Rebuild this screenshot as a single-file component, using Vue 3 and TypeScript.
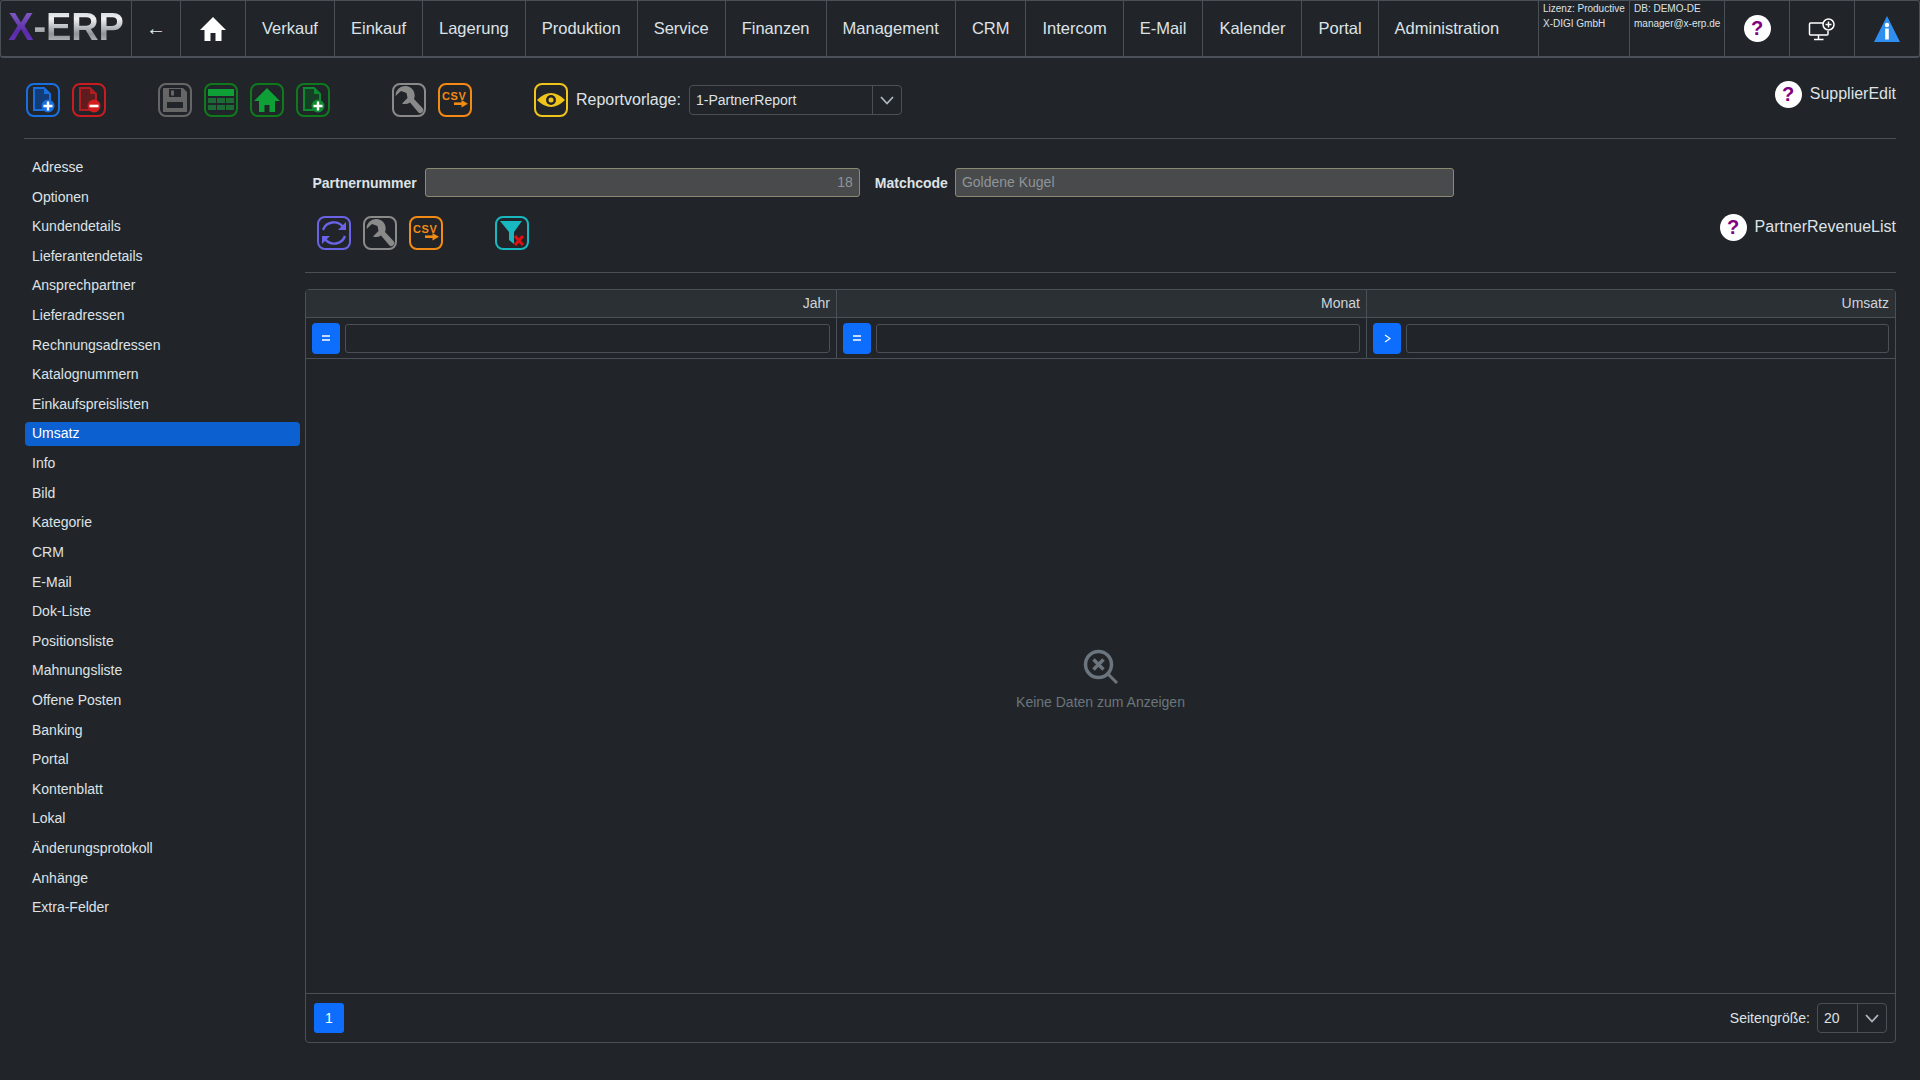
<template>
  <div class="page">
    <header class="navbar">
      <div class="cell logo"><span class="logo-x">X</span><span class="logo-rest">-ERP</span></div>
      <div class="cell back">←</div>
      <div class="cell home">
        <svg width="28" height="26" viewBox="0 0 28 26"><path d="M14 1 L27 14 H22.500 V25 H16.500 V17 H11.500 V25 H5.500 V14 H1 Z" fill="#fff" /></svg>
      </div>
      <div v-for="item in navItems" :key="item" class="cell nav-link">{{ item }}</div>
      <div class="cell nav-link grow">Administration</div>
      <div class="cell info lizenz">
        <div>Lizenz: Productive</div>
        <div>X-DIGI GmbH</div>
      </div>
      <div class="cell info db">
        <div>DB: DEMO-DE</div>
        <div>manager@x-erp.de</div>
      </div>
      <div class="cell tool"><span class="help">?</span></div>
      <div class="cell tool">
        <svg width="28" height="24" viewBox="0 0 28 24" fill="none" stroke="#fff" stroke-width="1.500">
          <path d="M15 6 H2.500 A1 1 0 0 0 1.500 7 V17 A1 1 0 0 0 2.500 18 H19 A1 1 0 0 0 20 17 V14" />
          <path d="M10.500 18 V22 M6 22.500 H15.500" />
          <circle cx="20.500" cy="7.500" r="5.500" />
          <path d="M20.500 4.500 V10.500 M17.500 7.500 H23.500" />
        </svg>
      </div>
      <div class="cell tool">
        <svg width="26" height="26" viewBox="0 0 26 26">
          <path d="M13 0 L26 26 H0 Z" fill="#2e8ff0" />
          <circle cx="13" cy="9" r="2.200" fill="#fff" />
          <rect x="11.200" y="12.500" width="3.600" height="11" fill="#fff" />
        </svg>
      </div>
    </header>

    <section class="toolbar">
      <div class="ico blue">
        <svg viewBox="0 0 30 30"><path d="M6 3 H16 L22 9 V25 H6 Z" fill="#123d78" stroke="#1a6fe0" stroke-width="2" /><path d="M16 3 L22 9 H16 Z" fill="#1a6fe0" /><circle cx="20" cy="21" r="6.500" fill="#1a6fe0" /><path d="M20 16.500 V25.500 M15.500 21 H24.500" stroke="#fff" stroke-width="2.400" /></svg>
      </div>
      <div class="ico red">
        <svg viewBox="0 0 30 30"><path d="M6 3 H16 L22 9 V25 H6 Z" fill="#5e1c1f" stroke="#b01e22" stroke-width="2" /><path d="M16 3 L22 9 H16 Z" fill="#b01e22" /><circle cx="20" cy="21" r="6.500" fill="#d21c20" /><path d="M15.500 21 H24.500" stroke="#fff" stroke-width="2.600" /></svg>
      </div>
      <div class="ico gray gap-a">
        <svg viewBox="0 0 30 30"><path d="M3 3 H23 L27 7 V27 H3 Z" fill="#666" /><rect x="9" y="4" width="12" height="8" fill="#212529" /><rect x="11" y="5.500" width="3" height="5" fill="#666" /><rect x="7" y="17" width="16" height="6" fill="#212529" /></svg>
      </div>
      <div class="ico green">
        <svg viewBox="0 0 30 30"><rect x="2" y="4" width="26" height="7" fill="#0e9f36" /><g fill="#1c6a34"><rect x="2" y="13" width="8" height="5" /><rect x="11" y="13" width="8" height="5" /><rect x="20" y="13" width="8" height="5" /><rect x="2" y="20" width="8" height="5" /><rect x="11" y="20" width="8" height="5" /><rect x="20" y="20" width="8" height="5" /></g></svg>
      </div>
      <div class="ico green">
        <svg viewBox="0 0 30 30"><path d="M15 3 L28 16 H23 V27 H17.500 V20 H12.500 V27 H7 V16 H2 Z" fill="#0e9f36" /></svg>
      </div>
      <div class="ico green">
        <svg viewBox="0 0 30 30"><path d="M6 3 H16 L22 9 V25 H6 Z" fill="#173f26" stroke="#0e8a30" stroke-width="2" /><path d="M16 3 L22 9 H16 Z" fill="#0e8a30" /><circle cx="20" cy="21" r="6.500" fill="#0e8a30" /><path d="M20 16.500 V25.500 M15.500 21 H24.500" stroke="#fff" stroke-width="2.400" /></svg>
      </div>
      <div class="ico wrench gap-b">
        <svg viewBox="0 0 30 30"><path d="M11 1 A9.500 9.500 0 0 0 1.500 11 L7 6 L12.500 8 L13.500 13 L8 18.500 A9.500 9.500 0 0 0 16 17.500 L24 27 A3 3 0 0 0 28.500 23 L20 14 A9.500 9.500 0 0 0 11 1 Z" fill="#8a8a8a" /></svg>
      </div>
      <div class="ico orange">
        <svg viewBox="0 0 30 30"><text x="2" y="15" class="csv-text">CSV</text><path d="M14 18.700 H23" fill="none" stroke="#f28a14" stroke-width="2.600" /><path d="M21.500 15 L28 18.700 L21.500 22.500 Z" fill="#f28a14" /></svg>
      </div>
      <div class="ico yellow gap-c">
        <svg viewBox="0 0 30 30"><path d="M1 15 Q15 1 29 15 Q15 29 1 15 Z" fill="#f0c419" /><circle cx="15" cy="15" r="5" fill="#212529" /><circle cx="15" cy="15" r="2.500" fill="#f0c419" /></svg>
      </div>
      <span class="report-label">Reportvorlage:</span>
      <div class="select report-select">
        <span class="select-value">1-PartnerReport</span>
        <span class="select-arrow"><svg width="14" height="9" viewBox="0 0 14 9"><path d="M1 1 L7 7.500 L13 1" fill="none" stroke="#adb5bd" stroke-width="1.800" /></svg></span>
      </div>
      <div class="help-title"><span class="help">?</span><span>SupplierEdit</span></div>
    </section>
    <hr class="rule top-rule" />

    <div class="body">
      <nav class="side">
        <div v-for="item in sideItems" :key="item" class="side-item" :class="{ active: item === 'Umsatz' }">{{ item }}</div>
      </nav>

      <main class="content">
        <div class="form-row">
          <label class="field-label">Partnernummer</label>
          <div class="field num">18</div>
          <label class="field-label second">Matchcode</label>
          <div class="field match">Goldene Kugel</div>
        </div>
        <div class="list-tools">
          <div class="ico purple">
            <svg viewBox="0 0 30 30" fill="none" stroke="#6a63e6" stroke-width="2.400"><path d="M4 12 A11.500 11.500 0 0 1 24 9" /><path d="M26 18 A11.500 11.500 0 0 1 6 21" /><path d="M27 4 V12 H19 Z" fill="#6a63e6" stroke="none" /><path d="M3 26 V18 H11 Z" fill="#6a63e6" stroke="none" /></svg>
          </div>
          <div class="ico wrench">
            <svg viewBox="0 0 30 30"><path d="M11 1 A9.500 9.500 0 0 0 1.500 11 L7 6 L12.500 8 L13.500 13 L8 18.500 A9.500 9.500 0 0 0 16 17.500 L24 27 A3 3 0 0 0 28.500 23 L20 14 A9.500 9.500 0 0 0 11 1 Z" fill="#8a8a8a" /></svg>
          </div>
          <div class="ico orange">
            <svg viewBox="0 0 30 30"><text x="2" y="15" class="csv-text">CSV</text><path d="M14 18.700 H23" fill="none" stroke="#f28a14" stroke-width="2.600" /><path d="M21.500 15 L28 18.700 L21.500 22.500 Z" fill="#f28a14" /></svg>
          </div>
          <div class="ico teal gap-d">
            <svg viewBox="0 0 30 30"><path d="M3 3 H25 L17 14 V26 L12 22 V14 Z" fill="#17b8c0" /><path d="M18 18 L26 27 M26 18 L18 27" stroke="#e01010" stroke-width="3" /></svg>
          </div>
          <div class="help-title"><span class="help">?</span><span>PartnerRevenueList</span></div>
        </div>
        <hr class="rule" />

        <div class="grid">
          <div class="grid-head">
            <div v-for="col in columns" :key="col.name" class="head-cell">{{ col.name }}</div>
          </div>
          <div class="grid-filter">
            <div v-for="col in columns" :key="col.name" class="filter-cell">
              <button class="op" type="button">
                <svg v-if="col.op === 'eq'" width="8" height="6" viewBox="0 0 8 6"><path d="M0 1 H8 M0 5 H8" stroke="#fff" stroke-width="1.400" /></svg>
                <svg v-else width="7" height="9" viewBox="0 0 7 9"><path d="M1 1 L6 4.500 L1 8" fill="none" stroke="#fff" stroke-width="1.200" /></svg>
              </button>
              <div class="filter-input"></div>
            </div>
          </div>
          <div class="grid-body">
            <svg width="36" height="36" viewBox="0 0 36 36" fill="none" stroke="#6c757d">
              <circle cx="15.500" cy="15.500" r="13" stroke-width="3.500" />
              <path d="M10.500 10.500 L20.500 20.500 M20.500 10.500 L10.500 20.500" stroke-width="3.500" />
              <path d="M25 25 L34 34" stroke-width="3" />
            </svg>
            <div class="empty-text">Keine Daten zum Anzeigen</div>
          </div>
          <div class="grid-foot">
            <button class="page-btn" type="button">1</button>
            <span class="size-label">Seitengröße:</span>
            <div class="select size-select">
              <span class="select-value">20</span>
              <span class="select-arrow"><svg width="14" height="9" viewBox="0 0 14 9"><path d="M1 1 L7 7.500 L13 1" fill="none" stroke="#adb5bd" stroke-width="1.800" /></svg></span>
            </div>
          </div>
        </div>
      </main>
    </div>
  </div>
</template>

<script setup lang="ts">
const navItems: string[] = [
  'Verkauf', 'Einkauf', 'Lagerung', 'Produktion', 'Service', 'Finanzen',
  'Management', 'CRM', 'Intercom', 'E-Mail', 'Kalender', 'Portal'
];

const sideItems: string[] = [
  'Adresse', 'Optionen', 'Kundendetails', 'Lieferantendetails', 'Ansprechpartner',
  'Lieferadressen', 'Rechnungsadressen', 'Katalognummern', 'Einkaufspreislisten',
  'Umsatz', 'Info', 'Bild', 'Kategorie', 'CRM', 'E-Mail', 'Dok-Liste', 'Positionsliste',
  'Mahnungsliste', 'Offene Posten', 'Banking', 'Portal', 'Kontenblatt', 'Lokal',
  'Änderungsprotokoll', 'Anhänge', 'Extra-Felder'
];

const columns = [
  { name: 'Jahr', op: 'eq' },
  { name: 'Monat', op: 'eq' },
  { name: 'Umsatz', op: 'gt' }
];
</script>

<style>
html,
body {
  margin: 0;
  background: #212529;
}
</style>

<style scoped>
.page {
  height: 1080px;
  overflow: hidden;
  background: #212529;
  color: #dee2e6;
  font-family: 'Liberation Sans', Arial, sans-serif;
  font-size: 14px;
}

/* obere Leiste */
.navbar {
  display: flex;
  height: 58px;
  box-sizing: border-box;
  border: 1px solid #495057;
  border-bottom-width: 2px;
  border-radius: 3px;
}

.cell {
  display: flex;
  align-items: center;
  justify-content: center;
  box-sizing: border-box;
  border-right: 1px solid #495057;
  flex: none;
}

.logo {
  width: 131px;
  font-weight: 700;
  font-size: 38px;
  padding-bottom: 2px;
  letter-spacing: -0.1px;
}

.logo-x {
  background: linear-gradient(180deg, #8a6bc8 0%, #5a2aa8 60%, #6f3fc0 100%);
  -webkit-background-clip: text;
  background-clip: text;
  color: transparent;
}

.logo-rest {
  background: linear-gradient(180deg, #c8ccd0 0%, #eef0f2 30%, #8f9499 65%, #d5d8da 100%);
  -webkit-background-clip: text;
  background-clip: text;
  color: transparent;
}

.back {
  width: 49px;
  font-size: 20px;
  color: #e9ecef;
}

.home {
  width: 65px;
}

.nav-link {
  padding: 0 16px;
  font-size: 16.500px;
  color: #dee2e6;
}

.nav-link.grow {
  flex: 1;
  justify-content: flex-start;
}

.info {
  display: block;
  font-size: 10px;
  line-height: 15px;
  padding: 0 4px;
  color: #dee2e6;
  white-space: nowrap;
}

.lizenz {
  width: 91px;
}

.db {
  width: 95px;
}

.tool {
  width: 65px;
}

.tool:last-child {
  width: 64px;
  border-right: none;
}

.help {
  display: inline-flex;
  align-items: center;
  justify-content: center;
  width: 27px;
  height: 27px;
  border-radius: 50%;
  background: #fff;
  color: #800080;
  font-weight: 700;
  font-size: 20px;
  flex: none;
}

/* Symbolleiste */
.toolbar {
  display: flex;
  align-items: center;
  height: 80px;
  padding: 4px 24px 0 26px;
  box-sizing: border-box;
}

.toolbar .help-title {
  margin-top: -12px;
}

.ico {
  width: 34px;
  height: 34px;
  box-sizing: border-box;
  border: 2px solid;
  border-radius: 8px;
  margin-right: 12px;
  flex: none;
}

.ico svg {
  display: block;
  width: 30px;
  height: 30px;
}

.blue { border-color: #1a6fe0; }
.red { border-color: #c81c20; }
.gray { border-color: #666; }
.green { border-color: #0e7a1c; }
.wrench { border-color: #8a8a8a; }
.orange { border-color: #f28a14; }
.yellow { border-color: #f0c419; }
.purple { border-color: #6a63e6; }
.teal { border-color: #17b8c0; }

.gap-a { margin-left: 40px; }
.gap-b { margin-left: 50px; }
.gap-c { margin-left: 50px; margin-right: 8px; }
.gap-d { margin-left: 40px; }

.csv-text {
  font: 700 11px 'Liberation Sans', Arial, sans-serif;
  letter-spacing: 0.6px;
  fill: #f28a14;
}

.report-label {
  font-size: 16px;
  margin-right: 8px;
  color: #dee2e6;
}

.select {
  display: flex;
  align-items: stretch;
  box-sizing: border-box;
  border: 1px solid #495057;
  border-radius: 4px;
  height: 30px;
}

.report-select {
  width: 213px;
}

.select-value {
  flex: 1;
  display: flex;
  align-items: center;
  padding-left: 6px;
  font-size: 14px;
}

.select-arrow {
  width: 28px;
  display: flex;
  align-items: center;
  justify-content: center;
  border-left: 1px solid #495057;
}

.help-title {
  margin-left: auto;
  display: flex;
  align-items: center;
  gap: 8px;
  font-size: 16px;
}

.rule {
  height: 1px;
  border: none;
  background: #495057;
  margin: 0;
}

.top-rule {
  margin: 0 24px;
}

/* Hauptbereich */
.body {
  display: flex;
  padding: 0 24px 0 25px;
}

.side {
  width: 275px;
  flex: none;
  display: flex;
  flex-direction: column;
  gap: 6.120px;
  padding-top: 17px;
}

.side-item {
  height: 23.500px;
  line-height: 23.500px;
  padding-left: 7px;
  border-radius: 4px;
}

.side-item.active {
  background: #0d60d0;
  color: #fff;
}

.content {
  flex: 1;
  min-width: 0;
  margin-left: 5px;
}

.form-row {
  display: flex;
  align-items: center;
  height: 29px;
  margin-top: 29px;
  padding-left: 7.500px;
}

.field-label {
  font-weight: 700;
  font-size: 14px;
  margin-right: 8px;
}

.field-label.second {
  margin-left: 15px;
  margin-right: 7px;
}

.field {
  box-sizing: border-box;
  height: 29px;
  line-height: 27px;
  background: #484a4c;
  border: 1px solid #8a8a72;
  border-radius: 3px;
  padding: 0 6px;
  color: #8f9498;
}

.num {
  width: 435px;
  text-align: right;
  font-size: 14px;
}

.match {
  width: 499px;
}

.list-tools {
  display: flex;
  align-items: center;
  height: 34px;
  margin-top: 19px;
  padding-left: 12px;
}

.list-tools .help-title {
  margin-top: -12px;
}

.list-tools + .rule {
  margin-top: 22px;
}

.grid {
  margin-top: 16px;
  height: 754px;
  box-sizing: border-box;
  border: 1px solid #495057;
  border-radius: 4px;
  display: flex;
  flex-direction: column;
}

.grid-head,
.grid-filter {
  display: grid;
  grid-template-columns: 531px 530px 1fr;
  border-bottom: 1px solid #495057;
  flex: none;
}

.head-cell {
  height: 27px;
  line-height: 27px;
  padding: 0 6px;
  text-align: right;
  background: #2b3035;
  color: #ced4da;
  font-size: 14px;
  border-right: 1px solid #495057;
}

.head-cell:last-child,
.filter-cell:last-child {
  border-right: none;
}

.filter-cell {
  display: flex;
  align-items: center;
  gap: 5px;
  height: 40px;
  padding: 0 6px;
  border-right: 1px solid #495057;
}

.op {
  width: 28px;
  height: 31px;
  flex: none;
  padding: 0;
  border: none;
  border-radius: 4px;
  background: #0d6efd;
  display: flex;
  align-items: center;
  justify-content: center;
}

.filter-input {
  flex: 1;
  height: 29px;
  box-sizing: border-box;
  border: 1px solid #495057;
  border-radius: 3px;
}

.grid-body {
  flex: 1;
  display: flex;
  flex-direction: column;
  align-items: center;
  justify-content: center;
  gap: 9px;
  padding-top: 6px;
  border-bottom: 1px solid #495057;
}

.empty-text {
  font-size: 14px;
  color: #6c757d;
}

.grid-foot {
  flex: none;
  height: 48px;
  display: flex;
  align-items: center;
  padding: 0 8px;
}

.page-btn {
  width: 30px;
  height: 30px;
  border: none;
  border-radius: 3px;
  padding: 0;
  background: #0d6efd;
  color: #fff;
  font: 14px 'Liberation Sans', Arial, sans-serif;
}

.size-label {
  margin-left: auto;
  margin-right: 7px;
}

.size-select {
  width: 70px;
  height: 30px;
}
</style>
